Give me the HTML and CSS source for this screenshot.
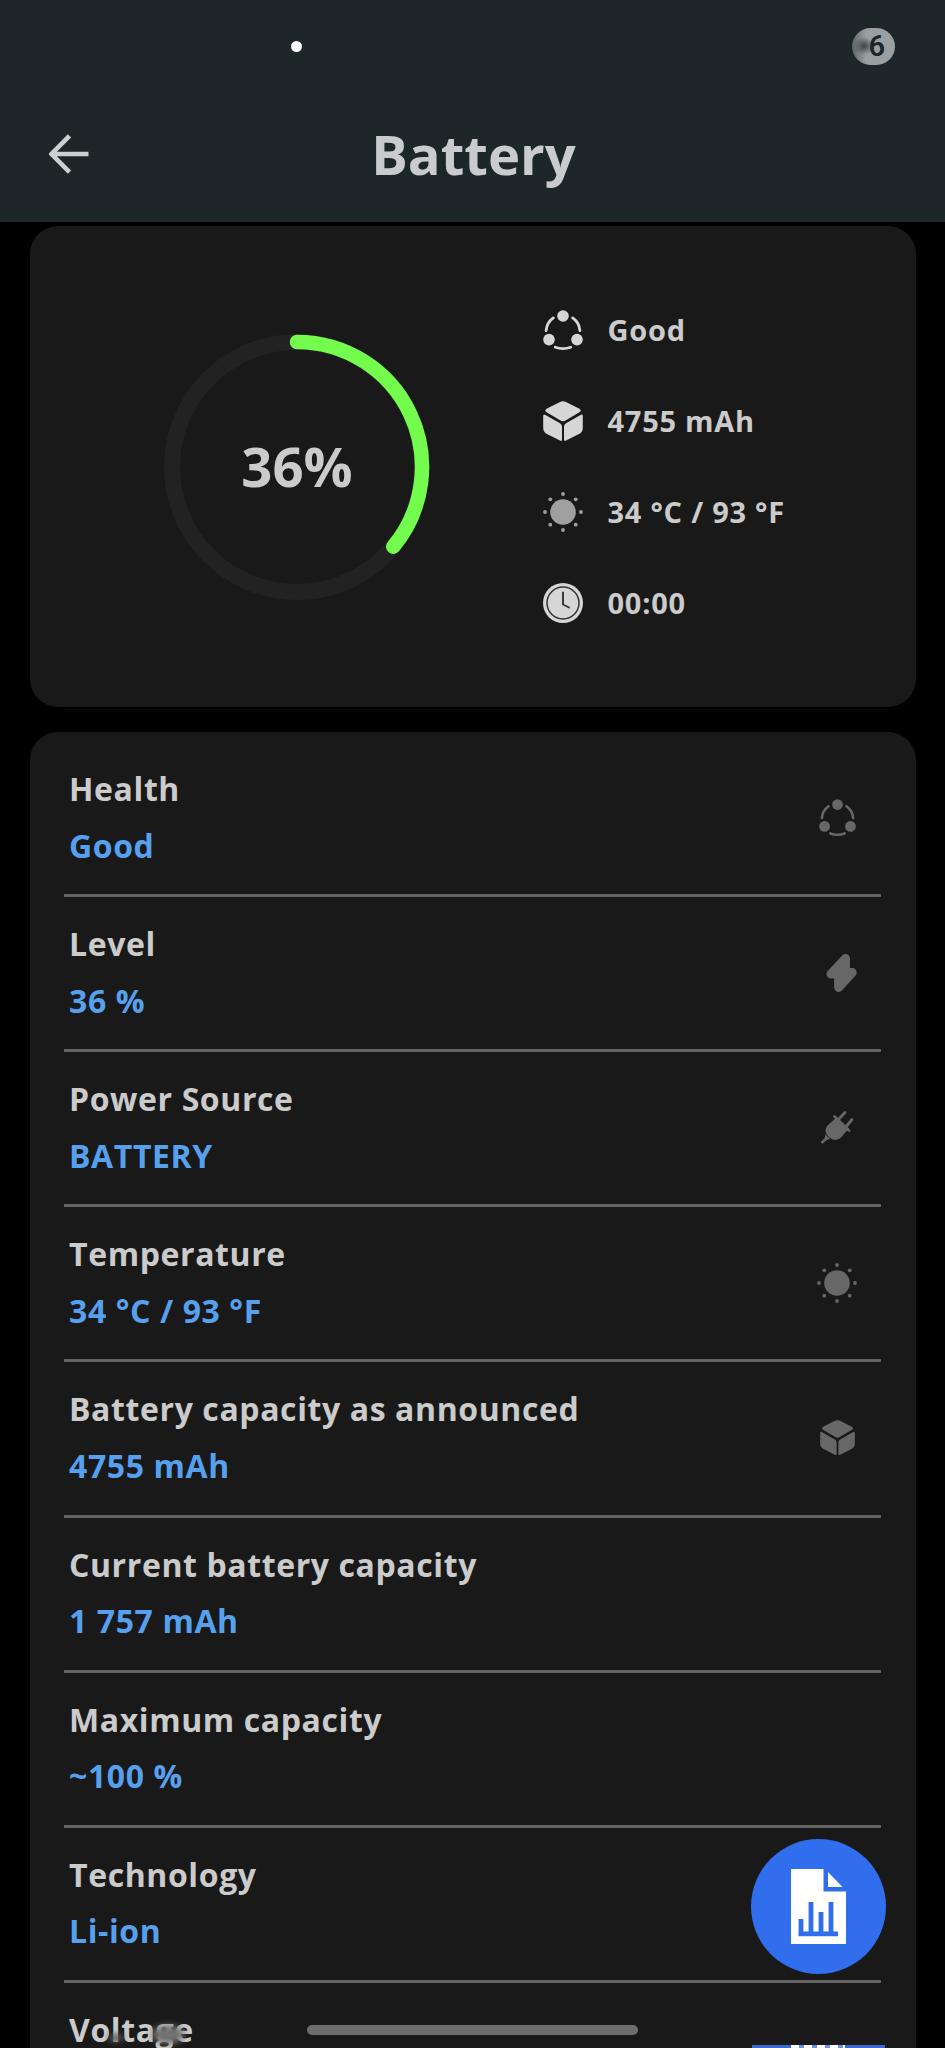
FILE: index.html
```html
<!DOCTYPE html>
<html lang="en">
<head>
<meta charset="utf-8">
<title>Battery</title>
<link rel="stylesheet" href="styles.css">
</head>
<body>
<svg class="defs" width="0" height="0" aria-hidden="true">
  <symbol id="i-health" viewBox="0 0 40 40">
    <g fill="currentColor"><circle cx="20" cy="6" r="5.8"/><circle cx="6" cy="29.6" r="5.8"/><circle cx="34" cy="29.6" r="5.8"/></g>
    <path d="M3.1 20.6A17.3 17.3 0 0 1 10.3 7.9M29.7 7.9A17.3 17.3 0 0 1 36.9 20.6M12.3 37.2Q20 40 27.7 37.2" fill="none" stroke="currentColor" stroke-width="2.8" stroke-linecap="round"/>
  </symbol>
  <symbol id="i-cube" viewBox="0 0 40 40">
    <path fill="currentColor" d="M16.5 1.2Q20-.6 23.500 1.200L36 7.500Q39.500 9.500 36 11.500L22.500 19.500Q20 21 17.500 19.500L4 11.500Q.5 9.500 4 7.500ZM2 13.800L17 22.300Q19 23.500 19 25.500V38.500Q19 40.500 17 39.600L4 33Q.2 31 .2 27V15Q.2 12.800 2 13.800ZM38 13.800L23 22.300Q21 23.500 21 25.500V38.500Q21 40.500 23 39.600L36 33Q39.800 31 39.800 27V15Q39.800 12.800 38 13.800Z"/>
  </symbol>
  <symbol id="i-sun" viewBox="0 0 40 40">
    <g fill="currentColor"><circle cx="20" cy="20" r="12.800"/><circle cx="20" cy="2" r="1.900"/><circle cx="20" cy="38" r="1.900"/><circle cx="2" cy="20" r="1.900"/><circle cx="38" cy="20" r="1.900"/><circle cx="7.300" cy="7.300" r="1.900"/><circle cx="32.700" cy="7.300" r="1.900"/><circle cx="7.300" cy="32.700" r="1.900"/><circle cx="32.700" cy="32.700" r="1.900"/></g>
  </symbol>
  <symbol id="i-clock" viewBox="0 0 40 40">
    <circle cx="20" cy="20" r="20" fill="currentColor"/>
    <g fill="none" stroke="#333" stroke-linecap="round"><circle cx="20" cy="20" r="16" stroke-width="1.500"/><path d="M20 9.500V21.500L26 24.500" stroke-width="1.900" stroke-linejoin="round"/></g>
  </symbol>
  <symbol id="i-bolt" viewBox="0 0 40 40">
    <path fill="currentColor" stroke="currentColor" stroke-width="9" stroke-linejoin="round" d="M28.500 5.500V19.500H35.200L21.600 34.500V21H14Z"/>
  </symbol>
  <symbol id="i-plug" viewBox="0 0 40 40">
    <g fill="none" stroke="currentColor" stroke-width="2.800" stroke-linecap="round"><path d="M20 13L28 4.500M28 20L35 11.500M17.500 8.500L32 22.500"/></g>
    <path fill="currentColor" d="M19 10L31 21.500L24 29.500Q19 34 13 30L11 28Q6.500 23.500 10 18Z"/>
    <path fill="currentColor" d="M8.500 26.500L13 31L9.500 32L6 35.500Q3.500 36 4 33.500L7.500 30.500Z"/>
  </symbol>
</svg>

<main class="screen">
  <header class="header">
    <div class="status">
      <span class="camera"></span>
      <span class="level-badge"><span class="level-digit">6</span></span>
    </div>
    <div class="toolbar">
      <svg class="back" viewBox="0 0 40 40"><path d="M39.500 20H3M20.500 1.800L2.500 20L20.500 38.200" fill="none" stroke="currentColor" stroke-width="4.600"/></svg>
      <h1 class="title">Battery</h1>
    </div>
  </header>

  <section class="card summary">
    <div class="gauge">
      <svg class="ring" viewBox="0 0 266 266">
        <circle cx="133" cy="133" r="125" fill="none" stroke="#222" stroke-width="16"/>
        <path d="M133 8A125 125 0 0 1 229.300 212.700" fill="none" stroke="#73fc4d" stroke-width="14.500" stroke-linecap="round"/>
      </svg>
      <span class="percent">36%</span>
    </div>
    <ul class="facts">
      <li class="fact"><svg class="icon"><use href="#i-health"/></svg><span>Good</span></li>
      <li class="fact"><svg class="icon"><use href="#i-cube"/></svg><span>4755 mAh</span></li>
      <li class="fact"><svg class="icon dim"><use href="#i-sun"/></svg><span>34 °C / 93 °F</span></li>
      <li class="fact"><svg class="icon"><use href="#i-clock"/></svg><span>00:00</span></li>
    </ul>
  </section>

  <section class="card details">
    <div class="row"><div class="label">Health</div><div class="value">Good</div><svg class="row-icon small"><use href="#i-health"/></svg></div>
    <div class="row"><div class="label">Level</div><div class="value">36 %</div><svg class="row-icon"><use href="#i-bolt"/></svg></div>
    <div class="row"><div class="label">Power Source</div><div class="value">BATTERY</div><svg class="row-icon"><use href="#i-plug"/></svg></div>
    <div class="row"><div class="label">Temperature</div><div class="value">34 °C / 93 °F</div><svg class="row-icon"><use href="#i-sun"/></svg></div>
    <div class="row"><div class="label">Battery capacity as announced</div><div class="value">4755 mAh</div><svg class="row-icon cube"><use href="#i-cube"/></svg></div>
    <div class="row"><div class="label">Current battery capacity</div><div class="value">1 757 mAh</div></div>
    <div class="row"><div class="label">Maximum capacity</div><div class="value">~100 %</div></div>
    <div class="row"><div class="label">Technology</div><div class="value">Li-ion</div></div>
    <div class="row"><div class="label">Voltage</div></div>
  </section>

  <span class="smudge smudge-a"></span>
  <span class="smudge smudge-b"></span>
  <div class="fab">
    <svg class="report" viewBox="0 0 55 75">
      <path fill="#fff" d="M0 0H32.500V22.500H55V75H0ZM37 3L51.500 18H37Z"/>
      <path fill="none" stroke="#306eee" stroke-width="4.800" d="M7.500 64.800H47M10 50V65M20 33V65M30 43V65M40 33V65"/>
    </svg>
  </div>
  <div class="peek"><span class="peek-icon"></span></div>
  <div class="home-bar"></div>
</main>
</body>
</html>
```
FILE: styles.css
```css
* { box-sizing: border-box; }
body { margin: 0; background: #000; }
.defs { position: absolute; }
.screen {
  position: relative;
  width: 945px;
  height: 2048px;
  overflow: hidden;
  background: #000;
  color: #cbcbcb;
  font-family: "Open Sans", "Noto Sans", sans-serif;
  font-weight: 700;
}
.header { height: 222px; background: #1d2629; }
.status {
  height: 93px;
  display: flex;
  align-items: center;
  justify-content: space-between;
  padding: 0 50px 0 291px;
}
.camera { width: 11px; height: 11px; border-radius: 50%; background: #fff; }
.level-badge {
  width: 43px;
  height: 37px;
  border-radius: 19px;
  display: flex;
  align-items: center;
  justify-content: flex-end;
  padding-right: 10px;
  background:
    radial-gradient(ellipse 10px 9px at 12px 18px, #444c4f 10%, transparent 100%),
    linear-gradient(90deg, #5d6568 0, #9a9fa1 14px);
  color: #1d2629;
  font: 600 29px/37px Roboto, sans-serif;
}
.toolbar {
  height: 129px;
  display: grid;
  grid-template-columns: 40px 1fr 40px;
  align-items: start;
  padding: 0 47px 0 49px;
}
.back { width: 40px; height: 40px; margin-top: 41px; color: #cdd0d1; }
.title {
  margin: 24px 0 0;
  text-align: center;
  font-size: 54.400px;
  line-height: 75px;
  font-weight: 700;
  color: #c9cbcc;
}
.card { width: 886px; margin-left: 29.500px; background: #191919; border-radius: 28px; }
.summary { height: 481px; margin-top: 4px; display: flex; }
.gauge { width: 266px; height: 266px; margin: 108px 0 0 134.500px; display: grid; place-items: center; }
.ring, .percent { grid-area: 1 / 1; }
.ring { width: 266px; height: 266px; }
.percent { font-size: 54.500px; line-height: 75px; margin-top: -1px; }
.facts { list-style: none; margin: 58px 0 0 112.500px; padding: 0; }
.fact {
  height: 91px;
  display: flex;
  align-items: center;
  gap: 25px;
  font-size: 29px;
  letter-spacing: .75px;
}
.icon { width: 40px; height: 40px; color: #d6d6d6; }
.icon.dim { color: #a0a0a0; }
.details { height: 1400px; margin-top: 25px; padding: 10px 34.500px 0; }
.row {
  height: 155.120px;
  display: grid;
  grid-template-columns: 1fr 40px;
  grid-template-rows: 56.500px 56.500px;
  column-gap: 10px;
  padding: 19px 24px 0 5px;
  border-bottom: 3px solid #636363;
  font-size: 32px;
  line-height: 56.500px;
  letter-spacing: .6px;
  white-space: nowrap;
}
.label { grid-column: 1; grid-row: 1; }
.value { grid-column: 1; grid-row: 2; color: #57a0ee; }
.row-icon {
  grid-column: 2;
  grid-row: 1 / 3;
  align-self: center;
  justify-self: center;
  width: 40px;
  height: 40px;
  color: #676767;
}
.row-icon.small { width: 37px; height: 37px; }
.row-icon.cube { width: 35px; height: 35px; }
.fab {
  position: absolute;
  left: 751px;
  top: 1839px;
  width: 135px;
  height: 135px;
  border-radius: 50%;
  background: #306eee;
  display: grid;
  place-items: center;
}
.report { width: 55px; height: 75px; }
.peek { position: absolute; left: 752px; top: 2045px; width: 133px; height: 3px; background: #3a68cc; }
.peek-icon {
  display: block;
  width: 54px;
  height: 3px;
  margin-left: 39px;
  background: repeating-linear-gradient(90deg, #fff 0 8px, #6f91dc 8px 13px);
}
.home-bar {
  position: absolute;
  left: 307px;
  top: 2025px;
  width: 331px;
  height: 10px;
  border-radius: 5px;
  background: #6d6d6d;
}
.smudge { position: absolute; border-radius: 50%; filter: blur(3px); }
.smudge-a { left: 152px; top: 2025px; width: 32px; height: 19px; background: #727272; }
.smudge-b { left: 108px; top: 2034px; width: 16px; height: 8px; background: #555; }
```
